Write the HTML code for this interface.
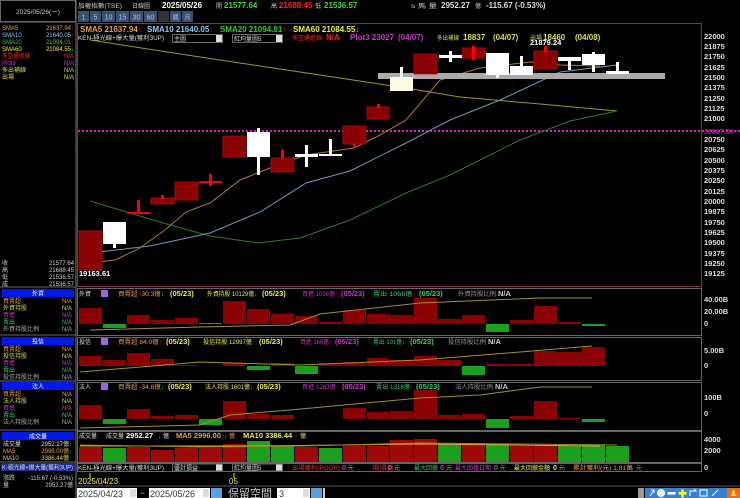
<!DOCTYPE html>
<html><head><meta charset="utf-8"><style>
html,body{margin:0;padding:0;background:#000;width:740px;height:498px;overflow:hidden}
svg{display:block}
text{font-family:"Liberation Sans","Noto Sans CJK TC",sans-serif;font-size:6px}
.b{font-weight:bold;font-size:8px}
.ax{fill:#ddd;font-size:7.5px;font-weight:bold}
</style></head><body>
<svg width="740" height="498" viewBox="0 0 740 498" xmlns="http://www.w3.org/2000/svg">
<rect width="740" height="498" fill="#000"/>
<!-- left panel -->
<rect x="0.5" y="0.5" width="75" height="21" fill="#000" stroke="#666"/>
<text x="16" y="14" fill="#ccc" textLength="44" lengthAdjust="spacingAndGlyphs">2025/05/26(一)</text>
<line x1="76" y1="0" x2="76" y2="498" stroke="#777"/>
<g>
<text x="2" y="30" fill="#e8a040">SMA5</text><text x="74" y="30" fill="#e8a040" text-anchor="end">21637.94<tspan fill="#f00">↑</tspan></text>
<text x="2" y="37" fill="#8cc8f0">SMA10</text><text x="74" y="37" fill="#8cc8f0" text-anchor="end">21640.05<tspan fill="#f00">↑</tspan></text>
<text x="2" y="44" fill="#3c3">SMA20</text><text x="74" y="44" fill="#3c3" text-anchor="end">21094.01<tspan fill="#f00">↑</tspan></text>
<text x="2" y="51" fill="#ee3">SMA60</text><text x="74" y="51" fill="#ee3" text-anchor="end">21084.55<tspan fill="#0f0">↓</tspan></text>
<text x="2" y="58" fill="#f22" textLength="28" lengthAdjust="spacingAndGlyphs">多空通道線</text><text x="74" y="58" fill="#f22" text-anchor="end">N/A</text>
<text x="2" y="65" fill="#c3c">Plot3</text><text x="74" y="65" fill="#c3c" text-anchor="end">N/A</text>
<text x="2" y="72" fill="#dd4" textLength="24" lengthAdjust="spacingAndGlyphs">多出補線</text><text x="74" y="72" fill="#dd4" text-anchor="end">N/A</text>
<text x="2" y="79" fill="#dd4">出場</text><text x="74" y="79" fill="#dd4" text-anchor="end">N/A</text>
<text x="2" y="265" fill="#ccc">收</text><text x="74" y="265" fill="#ccc" text-anchor="end">21577.64</text>
<text x="2" y="272" fill="#ccc">高</text><text x="74" y="272" fill="#ccc" text-anchor="end">21688.45</text>
<text x="2" y="279" fill="#ccc">低</text><text x="74" y="279" fill="#ccc" text-anchor="end">21536.57</text>
<text x="2" y="286" fill="#ccc">成</text><text x="74" y="286" fill="#ccc" text-anchor="end">21536.57</text>
</g>
<line x1="0" y1="22" x2="76" y2="22" stroke="#666"/>
<line x1="0" y1="287" x2="76" y2="287" stroke="#666"/>
<g>
<rect x="2" y="289" width="72" height="8" fill="#0018e8"/><text x="38" y="295.5" fill="#fff" text-anchor="middle">外資</text>
<text x="3" y="303" fill="#e8a040">買賣超</text><text x="72" y="303" fill="#e8a040" text-anchor="end">N/A</text>
<text x="3" y="310" fill="#dd4">外資持股</text><text x="72" y="310" fill="#dd4" text-anchor="end">N/A</text>
<text x="3" y="317" fill="#c3c">買進</text><text x="72" y="317" fill="#c3c" text-anchor="end">N/A</text>
<text x="3" y="324" fill="#3c6">賣出</text><text x="72" y="324" fill="#3c6" text-anchor="end">N/A</text>
<text x="3" y="331" fill="#aaa">外資持股比例</text><text x="72" y="331" fill="#aaa" text-anchor="end">N/A</text>
<line x1="0" y1="335" x2="76" y2="335" stroke="#666"/>
<rect x="2" y="337" width="72" height="8" fill="#0018e8"/><text x="38" y="343.5" fill="#fff" text-anchor="middle">投信</text>
<text x="3" y="351" fill="#e8a040">買賣超</text><text x="72" y="351" fill="#e8a040" text-anchor="end">N/A</text>
<text x="3" y="358" fill="#dd4">投信持股</text><text x="72" y="358" fill="#dd4" text-anchor="end">N/A</text>
<text x="3" y="365" fill="#c3c">買進</text><text x="72" y="365" fill="#c3c" text-anchor="end">N/A</text>
<text x="3" y="372" fill="#3c6">賣出</text><text x="72" y="372" fill="#3c6" text-anchor="end">N/A</text>
<text x="3" y="379" fill="#aaa">投信持股比例</text><text x="72" y="379" fill="#aaa" text-anchor="end">N/A</text>
<line x1="0" y1="381" x2="76" y2="381" stroke="#666"/>
<rect x="2" y="382" width="72" height="8" fill="#0018e8"/><text x="38" y="388.5" fill="#fff" text-anchor="middle">法人</text>
<text x="3" y="396" fill="#e8a040">買賣超</text><text x="72" y="396" fill="#e8a040" text-anchor="end">N/A</text>
<text x="3" y="403" fill="#dd4">法人持股</text><text x="72" y="403" fill="#dd4" text-anchor="end">N/A</text>
<text x="3" y="410" fill="#c3c">買進</text><text x="72" y="410" fill="#c3c" text-anchor="end">N/A</text>
<text x="3" y="417" fill="#3c6">賣出</text><text x="72" y="417" fill="#3c6" text-anchor="end">N/A</text>
<text x="3" y="424" fill="#aaa">法人持股比例</text><text x="72" y="424" fill="#aaa" text-anchor="end">N/A</text>
<line x1="0" y1="430" x2="76" y2="430" stroke="#666"/>
<rect x="2" y="432" width="72" height="8" fill="#0018e8"/><text x="38" y="438.5" fill="#fff" text-anchor="middle">成交量</text>
<text x="3" y="446" fill="#ddd">成交量</text><text x="72" y="446" fill="#ddd" text-anchor="end">2952.27億<tspan fill="#0f0">↓</tspan></text>
<text x="3" y="453" fill="#e8a040">MA5</text><text x="72" y="453" fill="#e8a040" text-anchor="end">2996.00億<tspan fill="#0f0">↓</tspan></text>
<text x="3" y="460" fill="#dd4">MA10</text><text x="72" y="460" fill="#dd4" text-anchor="end">3386.44億<tspan fill="#f00">↑</tspan></text>
<line x1="0" y1="462" x2="76" y2="462" stroke="#666"/>
<rect x="1" y="463" width="74" height="8" fill="#1a2a9a"/><text x="2" y="469.5" fill="#ddd" textLength="71" lengthAdjust="spacingAndGlyphs">K-極光線+爆大量(獲利3UP)</text>
<text x="3" y="480" fill="#ccc">漲跌</text><text x="73" y="480" fill="#ccc" text-anchor="end">-115.67 (-0.53%)</text>
<text x="3" y="487" fill="#ccc">量</text><text x="73" y="487" fill="#ccc" text-anchor="end">2952.27億</text>
</g>

<!-- header -->
<text x="78" y="8" fill="#ccc" textLength="44" lengthAdjust="spacingAndGlyphs">加權指數(TSE)</text>
<text x="132" y="8" fill="#ccc">日線圖</text>
<text x="162" y="8" class="b" fill="#fff">2025/05/26</text>
<text x="216" y="8" fill="#ccc">開</text><text x="224" y="8" class="b" fill="#3d3">21577.64</text>
<text x="271" y="8" fill="#ccc">高</text><text x="279" y="8" class="b" fill="#f22">21688.45</text>
<text x="315" y="8" fill="#ccc">低</text><text x="324" y="8" class="b" fill="#3d3">21536.57</text>
<text x="411" y="8" fill="#ccc" textLength="26" lengthAdjust="spacingAndGlyphs">s 馬  量</text><text x="441" y="8" class="b" fill="#ddd">2952.27</text>
<text x="475" y="8" fill="#ccc">億</text><text x="486" y="8" class="b" fill="#ddd">-115.67 (-0.53%)</text>
<g style="font-size:7px">
<rect x="78" y="11" width="11" height="11" fill="#3a5070"/><text x="83.5" y="19.5" fill="#9cf" text-anchor="middle" style="font-size:7px">1</text>
<rect x="90" y="11" width="11" height="11" fill="#3a5070"/><text x="95.5" y="19.5" fill="#9cf" text-anchor="middle" style="font-size:7px">5</text>
<rect x="102" y="11" width="13" height="11" fill="#3a5070"/><text x="108.5" y="19.5" fill="#9cf" text-anchor="middle" style="font-size:7px">10</text>
<rect x="116" y="11" width="13" height="11" fill="#3a5070"/><text x="122.5" y="19.5" fill="#9cf" text-anchor="middle" style="font-size:7px">15</text>
<rect x="130" y="11" width="13" height="11" fill="#3a5070"/><text x="136.5" y="19.5" fill="#9cf" text-anchor="middle" style="font-size:7px">30</text>
<rect x="144" y="11" width="13" height="11" fill="#3a5070"/><text x="150.5" y="19.5" fill="#9cf" text-anchor="middle" style="font-size:7px">60</text>
<rect x="158" y="11" width="11" height="11" fill="#333"/>
<rect x="170" y="11" width="11" height="11" fill="#3a5070"/><text x="175.5" y="19.5" fill="#9cf" text-anchor="middle">週</text>
<rect x="182" y="11" width="11" height="11" fill="#3a5070"/><text x="187.5" y="19.5" fill="#9cf" text-anchor="middle">月</text>
</g>

<!-- main chart frame -->
<rect x="77.5" y="23.5" width="624" height="263" fill="none" stroke="#803050"/>
<text x="80" y="32" class="b" fill="#e8a040">SMA5 21637.94<tspan fill="#f00">↑</tspan></text>
<text x="147" y="32" class="b" fill="#8cc8f0">SMA10 21640.05<tspan fill="#f00">↑</tspan></text>
<text x="220" y="32" class="b" fill="#3c3">SMA20 21094.01<tspan fill="#f00">↑</tspan></text>
<text x="293" y="32" class="b" fill="#ee3">SMA60 21084.55<tspan fill="#0f0">↓</tspan></text>
<text x="78" y="40" fill="#ddd" textLength="86" lengthAdjust="spacingAndGlyphs">KEN-極光線+爆大量(獲利3UP)</text>
<rect x="172.5" y="34.5" width="50" height="8" fill="#000" stroke="#666"/><text x="174" y="41" fill="#ddd">主圖</text><rect x="216" y="35" width="6" height="7" fill="#ddd"/>
<rect x="232.5" y="34.5" width="50" height="8" fill="#000" stroke="#666"/><text x="234" y="41" fill="#ddd">紅均量圖5</text><rect x="276" y="35" width="6" height="7" fill="#ddd"/>
<text x="292" y="40" fill="#f22" textLength="30" lengthAdjust="spacingAndGlyphs">多空通道線</text><text x="326" y="40" fill="#f22" class="b">N/A</text>
<text x="350" y="40" fill="#c3c" class="b">Plot3 23027</text>
<text x="398" y="40" fill="#c3c" class="b">(04/07)</text>
<text x="437" y="40" fill="#dd4" textLength="22" lengthAdjust="spacingAndGlyphs">多出補線</text><text x="463" y="40" fill="#dd4" class="b">18837</text>
<text x="493" y="40" fill="#dd4" class="b">(04/07)</text>
<text x="530" y="40" fill="#dd4">出場</text><text x="543" y="40" fill="#dd4" class="b">18460</text>
<text x="575" y="40" fill="#dd4" class="b">(04/08)</text>

<!-- price axis -->
<g class="ax">
<text x="704" y="39" class="ax">22000</text><text x="704" y="49" class="ax">21875</text><text x="704" y="59" class="ax">21750</text><text x="704" y="70" class="ax">21625</text><text x="704" y="80" class="ax">21500</text><text x="704" y="90" class="ax">21375</text><text x="704" y="101" class="ax">21250</text><text x="704" y="111" class="ax">21125</text><text x="704" y="121" class="ax">21000</text><text x="704" y="142" class="ax">20750</text><text x="704" y="152" class="ax">20625</text><text x="704" y="163" class="ax">20500</text><text x="704" y="173" class="ax">20375</text><text x="704" y="183" class="ax">20250</text><text x="704" y="194" class="ax">20125</text><text x="704" y="204" class="ax">20000</text><text x="704" y="214" class="ax">19875</text><text x="704" y="225" class="ax">19750</text><text x="704" y="235" class="ax">19625</text><text x="704" y="245" class="ax">19500</text><text x="704" y="256" class="ax">19375</text><text x="704" y="266" class="ax">19250</text><text x="704" y="276" class="ax">19125</text>
</g>
<line x1="78" y1="131" x2="740" y2="131" stroke="#e020c0" stroke-width="2" stroke-dasharray="2,2"/>
<text x="704" y="134" fill="#e020c0" style="font-size:7px">20887.30</text>

<!-- MA lines -->
<polyline fill="none" stroke="#9a9a20" stroke-width="1" points="90,40 200,57 300,72 406,88 460,97 540,104 617,111"/>
<polyline fill="none" stroke="#2a7a2a" stroke-width="1" points="90,201 170,225 210,236 258,243 300,238 350,220 406,193 450,175 520,140 570,121 617,111"/>
<polyline fill="none" stroke="#6a9ab8" stroke-width="1" points="90,253 150,246 210,233 260,212 306,183 350,171 406,143 450,120 500,100 560,72 617,65"/>
<polyline fill="none" stroke="#b0782a" stroke-width="1" points="90,263 115,260 140,248 165,230 186,212 210,203 240,180 270,168 306,155 354,148 380,135 406,120 440,80 480,68 530,62 560,65 600,66"/>

<rect x="378" y="73" width="287" height="6" fill="#aaa"/>
<g fill="#8b0000" stroke="#b01010" stroke-width="0.8">
<rect x="79" y="231" width="23" height="39"/>
<rect x="151" y="198" width="23" height="6"/>
<rect x="175" y="182" width="23" height="18"/>
<rect x="223" y="136" width="23" height="21"/>
<rect x="271" y="158" width="23" height="14"/>
<rect x="343" y="126" width="23" height="18"/>
<rect x="367" y="107" width="22" height="12"/>
<rect x="414" y="54" width="23" height="20"/>
<rect x="462" y="48" width="23" height="10"/>
<rect x="534" y="51" width="23" height="18"/>
</g>
<g fill="#f00">
<rect x="127" y="212" width="23" height="2"/><rect x="137" y="200" width="3" height="13"/>
<rect x="161" y="195" width="3" height="4"/>
<rect x="199" y="181" width="23" height="2"/><rect x="209" y="174" width="3" height="12"/>
<rect x="281" y="150" width="3" height="8"/>
<rect x="353" y="144" width="3" height="4"/>
<rect x="377" y="104" width="3" height="4"/>
<rect x="472" y="46" width="3" height="14"/>
<rect x="544" y="46" width="3" height="6"/>
</g>
<g fill="#fff">
<rect x="103" y="222" width="23" height="22"/><rect x="113" y="244" width="3" height="4"/>
<rect x="247" y="132" width="23" height="25"/><rect x="257" y="128" width="3" height="47"/>
<rect x="295" y="154" width="23" height="3"/><rect x="305" y="145" width="3" height="22"/>
<rect x="319" y="154" width="23" height="2"/><rect x="329" y="139" width="3" height="16"/>
<rect x="390" y="77" width="23" height="14" fill="#fffbe0"/><rect x="400" y="67" width="3" height="10"/>
<rect x="439" y="55" width="23" height="3"/><rect x="449" y="51" width="3" height="11"/>
<rect x="486" y="53" width="23" height="22"/><rect x="496" y="75" width="3" height="3"/>
<rect x="510" y="66" width="23" height="9"/><rect x="520" y="56" width="3" height="10"/>
<rect x="558" y="57" width="23" height="4"/><rect x="568" y="57" width="3" height="13"/>
<rect x="582" y="54" width="23" height="11"/><rect x="592" y="52" width="3" height="20"/>
<rect x="606" y="71" width="23" height="3"/><rect x="616" y="62" width="3" height="9"/>
</g>
<text x="530" y="45" fill="#fff" class="b" style="font-size:7.5px">21879.24</text>
<text x="79" y="276" fill="#fff" class="b" style="font-size:7.5px">19163.61</text>

<!-- sub panel frames -->
<g fill="none" stroke="#666">
<rect x="77.5" y="288.5" width="624" height="47"/>
<rect x="77.5" y="337.5" width="624" height="43"/>
<rect x="77.5" y="382.5" width="624" height="48"/>
<rect x="77.5" y="431.5" width="624" height="31"/>
<rect x="77.5" y="463.5" width="624" height="8"/>
</g>
<!-- panel 1 -->
<g>
<text x="79" y="296" fill="#ddd">外資</text><rect x="101" y="290" width="7" height="7" fill="#a060e0"/>
<text x="118" y="296" fill="#e8a040" textLength="46" lengthAdjust="spacingAndGlyphs">買賣超 -30.3億<tspan fill="#0f0">↓</tspan></text><text x="170" y="296" fill="#ee3" class="b" style="font-size:7.5px">(05/23)</text>
<text x="207" y="296" fill="#ee3" textLength="50" lengthAdjust="spacingAndGlyphs">外資持股 10129億<tspan fill="#0f0">↓</tspan></text><text x="262" y="296" fill="#ee3" class="b" style="font-size:7.5px">(05/23)</text>
<text x="302" y="296" fill="#c3c" textLength="36" lengthAdjust="spacingAndGlyphs">買進 1036億<tspan fill="#f00">↑</tspan></text><text x="341" y="296" fill="#c3c" class="b" style="font-size:7.5px">(05/23)</text>
<text x="373" y="296" fill="#3c6" textLength="43" lengthAdjust="spacingAndGlyphs">賣出 1066億<tspan fill="#f00">↑</tspan></text><text x="419" y="296" fill="#3c6" class="b" style="font-size:7.5px">(05/23)</text>
<text x="458" y="296" fill="#999" textLength="38" lengthAdjust="spacingAndGlyphs">外資持股比例</text><text x="498" y="296" class="b" fill="#ccc" style="font-size:7.5px">N/A</text>
</g>
<g fill="#8b0000">
<rect x="79" y="308" width="23" height="16"/><rect x="127" y="315" width="23" height="9"/><rect x="151" y="320" width="23" height="4"/><rect x="175" y="318" width="23" height="6"/><rect x="223" y="301" width="23" height="23"/><rect x="247" y="309" width="23" height="15"/><rect x="271" y="314" width="23" height="10"/><rect x="295" y="316" width="23" height="8"/><rect x="319" y="322" width="23" height="2"/><rect x="343" y="310" width="23" height="14"/><rect x="367" y="314" width="22" height="10"/><rect x="390" y="315" width="23" height="9"/><rect x="414" y="298" width="23" height="26"/><rect x="438" y="319" width="23" height="5"/><rect x="462" y="315" width="23" height="9"/><rect x="510" y="320" width="23" height="4"/><rect x="534" y="306" width="23" height="18"/><rect x="558" y="322" width="23" height="2"/>
</g>
<g fill="#1aa01a"><rect x="103" y="324" width="23" height="4"/><rect x="199" y="323" width="23" height="1"/><rect x="486" y="324" width="23" height="8"/><rect x="582" y="324" width="23" height="2"/></g>
<polyline fill="none" stroke="#a0902a" points="90,330 200,327 290,325 320,314 420,303 540,298 592,298"/>
<g class="ax"><text x="704" y="302" class="ax">40.00B</text><text x="704" y="314" class="ax">20.00B</text><text x="704" y="326" class="ax">0</text></g>
<!-- panel 2 -->
<g>
<text x="79" y="344" fill="#ddd">投信</text><rect x="101" y="338" width="7" height="7" fill="#a060e0"/>
<text x="118" y="344" fill="#e8a040" textLength="44" lengthAdjust="spacingAndGlyphs">買賣超 64.0億<tspan fill="#f00">↑</tspan></text><text x="166" y="344" fill="#ee3" class="b" style="font-size:7.5px">(05/23)</text>
<text x="203" y="344" fill="#ee3" textLength="52" lengthAdjust="spacingAndGlyphs">投信持股 12997億<tspan fill="#f00">↑</tspan></text><text x="259" y="344" fill="#ee3" class="b" style="font-size:7.5px">(05/23)</text>
<text x="300" y="344" fill="#c3c" textLength="32" lengthAdjust="spacingAndGlyphs">買進 166億<tspan fill="#f00">↑</tspan></text><text x="335" y="344" fill="#c3c" class="b" style="font-size:7.5px">(05/23)</text>
<text x="373" y="344" fill="#3c6" textLength="32" lengthAdjust="spacingAndGlyphs">賣出 101億<tspan fill="#0f0">↓</tspan></text><text x="410" y="344" fill="#3c6" class="b" style="font-size:7.5px">(05/23)</text>
<text x="448" y="344" fill="#999" textLength="38" lengthAdjust="spacingAndGlyphs">投信持股比例</text><text x="488" y="344" class="b" fill="#ccc" style="font-size:7.5px">N/A</text>
</g>
<g fill="#8b0000">
<rect x="79" y="356" width="23" height="10"/><rect x="103" y="360" width="23" height="6"/><rect x="127" y="353" width="23" height="13"/><rect x="151" y="359" width="23" height="7"/><rect x="175" y="365" width="23" height="1"/><rect x="223" y="363" width="23" height="3"/><rect x="271" y="363" width="23" height="3"/><rect x="319" y="363" width="23" height="3"/><rect x="343" y="362" width="23" height="4"/><rect x="367" y="358" width="22" height="8"/><rect x="390" y="360" width="23" height="6"/><rect x="414" y="356" width="23" height="10"/><rect x="438" y="360" width="23" height="6"/><rect x="486" y="364" width="23" height="2"/><rect x="510" y="364" width="23" height="2"/><rect x="534" y="351" width="23" height="15"/><rect x="558" y="352" width="23" height="14"/><rect x="582" y="347" width="23" height="19"/>
</g>
<g fill="#1aa01a"><rect x="247" y="366" width="23" height="4"/><rect x="295" y="366" width="23" height="8"/><rect x="462" y="366" width="23" height="9"/></g>
<polyline fill="none" stroke="#a0902a" points="80,372 200,362 300,365 420,360 520,352 592,346"/>
<g class="ax"><text x="704" y="353" class="ax">5.00B</text><text x="704" y="368" class="ax">0</text></g>
<!-- panel 3 -->
<g>
<text x="79" y="389" fill="#ddd">法人</text><rect x="101" y="383" width="7" height="7" fill="#a060e0"/>
<text x="118" y="389" fill="#e8a040" textLength="46" lengthAdjust="spacingAndGlyphs">買賣超 -34.6億<tspan fill="#0f0">↓</tspan></text><text x="168" y="389" fill="#ee3" class="b" style="font-size:7.5px">(05/23)</text>
<text x="205" y="389" fill="#ee3" textLength="48" lengthAdjust="spacingAndGlyphs">法人持股 1601億<tspan fill="#0f0">↓</tspan></text><text x="257" y="389" fill="#ee3" class="b" style="font-size:7.5px">(05/23)</text>
<text x="302" y="389" fill="#c3c" textLength="37" lengthAdjust="spacingAndGlyphs">買進 1283億<tspan fill="#f00">↑</tspan></text><text x="342" y="389" fill="#c3c" class="b" style="font-size:7.5px">(05/23)</text>
<text x="376" y="389" fill="#3c6" textLength="37" lengthAdjust="spacingAndGlyphs">賣出 1318億<tspan fill="#f00">↑</tspan></text><text x="416" y="389" fill="#3c6" class="b" style="font-size:7.5px">(05/23)</text>
<text x="455" y="389" fill="#999" textLength="38" lengthAdjust="spacingAndGlyphs">法人持股比例</text><text x="495" y="389" class="b" fill="#ccc" style="font-size:7.5px">N/A</text>
</g>
<g fill="#8b0000">
<rect x="79" y="405" width="23" height="14"/><rect x="127" y="409" width="23" height="10"/><rect x="151" y="416" width="23" height="3"/><rect x="175" y="415" width="23" height="4"/><rect x="223" y="401" width="23" height="18"/><rect x="247" y="414" width="23" height="5"/><rect x="271" y="415" width="23" height="4"/><rect x="343" y="408" width="23" height="11"/><rect x="367" y="412" width="22" height="7"/><rect x="390" y="411" width="23" height="8"/><rect x="414" y="390" width="23" height="29"/><rect x="438" y="415" width="23" height="4"/><rect x="462" y="414" width="23" height="5"/><rect x="510" y="416" width="23" height="3"/><rect x="534" y="401" width="23" height="18"/><rect x="558" y="418" width="23" height="1"/>
</g>
<g fill="#1aa01a"><rect x="103" y="419" width="23" height="5"/><rect x="199" y="419" width="23" height="6"/><rect x="486" y="419" width="23" height="9"/><rect x="582" y="419" width="23" height="3"/></g>
<polyline fill="none" stroke="#a0902a" points="80,428 200,425 230,415 290,410 420,398 480,395 540,387 592,387"/>
<g class="ax"><text x="704" y="400" class="ax">100B</text><text x="704" y="416" class="ax">0</text></g>
<!-- panel 4 volume -->
<g>
<text x="79" y="438" fill="#ddd">成交量</text>
<text x="106" y="438" fill="#ddd">成交量</text><text x="126" y="438" class="b" fill="#fff" style="font-size:7.5px">2952.27</text><text x="158" y="438" fill="#0f0">↓</text><text x="163" y="438" fill="#ddd">億</text>
<text x="176" y="438" class="b" fill="#e8a040" style="font-size:7.5px">MA5 2996.00</text><text x="224" y="438" fill="#0f0">↓</text><text x="229" y="438" fill="#e8a040">億</text>
<text x="243" y="438" class="b" fill="#ee3" style="font-size:7.5px">MA10 3386.44</text><text x="295" y="438" fill="#f00">↑</text><text x="300" y="438" fill="#ee3">億</text>
</g>
<g fill="#a00808">
<rect x="79" y="447" width="23" height="15"/><rect x="127" y="447" width="23" height="15"/><rect x="151" y="450" width="23" height="12"/><rect x="175" y="448" width="23" height="14"/><rect x="199" y="448" width="23" height="14"/><rect x="223" y="444" width="23" height="18"/><rect x="295" y="447" width="23" height="15"/><rect x="343" y="446" width="23" height="16"/><rect x="367" y="446" width="22" height="16"/><rect x="390" y="440" width="23" height="22"/><rect x="414" y="439" width="23" height="23"/><rect x="462" y="443" width="23" height="19"/><rect x="510" y="446" width="23" height="16"/><rect x="534" y="445" width="23" height="17"/>
</g>
<g fill="#1aa01a"><rect x="103" y="448" width="23" height="14"/><rect x="247" y="441" width="23" height="21"/><rect x="271" y="446" width="23" height="16"/><rect x="319" y="448" width="23" height="14"/><rect x="438" y="443" width="23" height="19"/><rect x="486" y="444" width="23" height="18"/><rect x="558" y="446" width="23" height="16"/><rect x="582" y="445" width="23" height="17"/><rect x="606" y="446" width="23" height="16"/></g>
<polyline fill="none" stroke="#e8a040" points="80,446 250,446 420,444 600,446"/>
<polyline fill="none" stroke="#9a8a20" points="80,445 200,447 300,446 420,443 617,445"/>
<g class="ax"><text x="704" y="442" class="ax">4000</text><text x="704" y="453" class="ax">2000</text><text x="704" y="470" class="ax">0</text></g>
<!-- bottom info row -->
<g style="font-size:5.5px">
<text x="78" y="470" fill="#ddd" textLength="86" lengthAdjust="spacingAndGlyphs">KEN-極光線+爆大量(獲利3UP)</text>
<rect x="172.5" y="464" width="50" height="7" fill="#000" stroke="#666"/><text x="174" y="470" fill="#ddd">優計損益</text><rect x="216" y="464.5" width="6" height="6" fill="#ddd"/>
<rect x="232.5" y="464" width="50" height="7" fill="#000" stroke="#666"/><text x="234" y="470" fill="#ddd">紅均量圖5</text><rect x="276" y="464.5" width="6" height="6" fill="#ddd"/>
<text x="292" y="470" fill="#e03030" textLength="48" lengthAdjust="spacingAndGlyphs">出場獲利(POOR)</text><text x="342" y="470" class="b" fill="#c3c" style="font-size:7px">0</text><text x="348" y="470" fill="#999">元</text>
<text x="372" y="470" fill="#e03030" textLength="22" lengthAdjust="spacingAndGlyphs">場損益</text><text x="388" y="470" class="b" fill="#c3c" style="font-size:7px">0</text><text x="394" y="470" fill="#999">元</text>
<text x="414" y="470" fill="#3c6" textLength="24" lengthAdjust="spacingAndGlyphs">最大回撤</text><text x="440" y="470" class="b" fill="#c3c" style="font-size:7px">0</text><text x="446" y="470" fill="#999">元</text>
<text x="455" y="470" fill="#c3c" textLength="36" lengthAdjust="spacingAndGlyphs">最大回檔日期</text><text x="494" y="470" class="b" fill="#c3c" style="font-size:7px">0</text><text x="500" y="470" fill="#999">元</text>
<text x="514" y="470" fill="#ee3" textLength="36" lengthAdjust="spacingAndGlyphs">最大回撤金額</text><text x="553" y="470" class="b" fill="#ee3" style="font-size:7px">0</text><text x="559" y="470" fill="#999">元</text>
<text x="573" y="470" fill="#e8a040" textLength="60" lengthAdjust="spacingAndGlyphs">累計獲利(元) 1.81萬</text><text x="636" y="470" fill="#999">元</text>
</g>
<!-- date axis -->
<line x1="90" y1="473" x2="90" y2="478" stroke="#ee3"/><line x1="234" y1="473" x2="234" y2="478" stroke="#ee3"/>
<text x="78" y="484" fill="#ee3" style="font-size:8px">2025/04/23</text>
<text x="229" y="484" fill="#ee3" style="font-size:8px">05</text>
<line x1="77" y1="486" x2="740" y2="486" stroke="#555"/>
<!-- bottom controls -->
<rect x="77" y="488" width="60" height="10" fill="#fff"/><text x="78" y="497" fill="#333" style="font-size:9px">2025/04/23</text><rect x="130" y="489" width="6" height="8" fill="#ddd"/>
<text x="140" y="496" fill="#ccc" style="font-size:8px">~</text>
<rect x="149" y="488" width="61" height="10" fill="#fff"/><text x="150" y="497" fill="#333" style="font-size:9px">2025/05/26</text><rect x="203" y="489" width="6" height="8" fill="#ddd"/>
<rect x="211" y="488" width="11" height="10" fill="#5aa0e0"/>
<text x="228" y="497" fill="#ccc" style="font-size:11px">保留空間</text>
<rect x="277" y="488" width="33" height="10" fill="#fff"/><text x="279" y="497" fill="#333" style="font-size:9px">3</text><rect x="303" y="489" width="6" height="8" fill="#ddd"/>
<rect x="311" y="488" width="11" height="10" fill="#5aa0e0"/>
<rect x="323" y="488" width="2" height="10" fill="#ccc"/>
<rect x="638" y="488" width="6" height="10" fill="#999"/>
<rect x="645" y="488" width="95" height="10" fill="#3a80d0"/>
<g fill="#fff" stroke="#fff">
<path d="M650 496 L654 490 M651 490 L654 490 L654 493" fill="none"/>
<circle cx="661" cy="493" r="3.5" fill="#f0f0f0"/>
<rect x="668" y="492.5" width="7" height="1.5"/>
<rect x="679" y="492.5" width="7" height="1.5" fill="#ff0" stroke="#ff0"/><rect x="681.8" y="490" width="1.5" height="7" fill="#ff0" stroke="#ff0"/>
<path d="M690 496 L690 491 L696 491 L694 489" fill="none"/>
<rect x="700" y="490" width="7" height="6" fill="none"/>
<path d="M712 496 L718 490" fill="none"/>
</g>
<rect x="727" y="488" width="13" height="10" fill="#e07020"/><path d="M730 496 L737 496 L735 494 L735 491 Q733.5 489 732 491 L732 494 Z" fill="#ffd040"/>
</svg>
</body></html>
